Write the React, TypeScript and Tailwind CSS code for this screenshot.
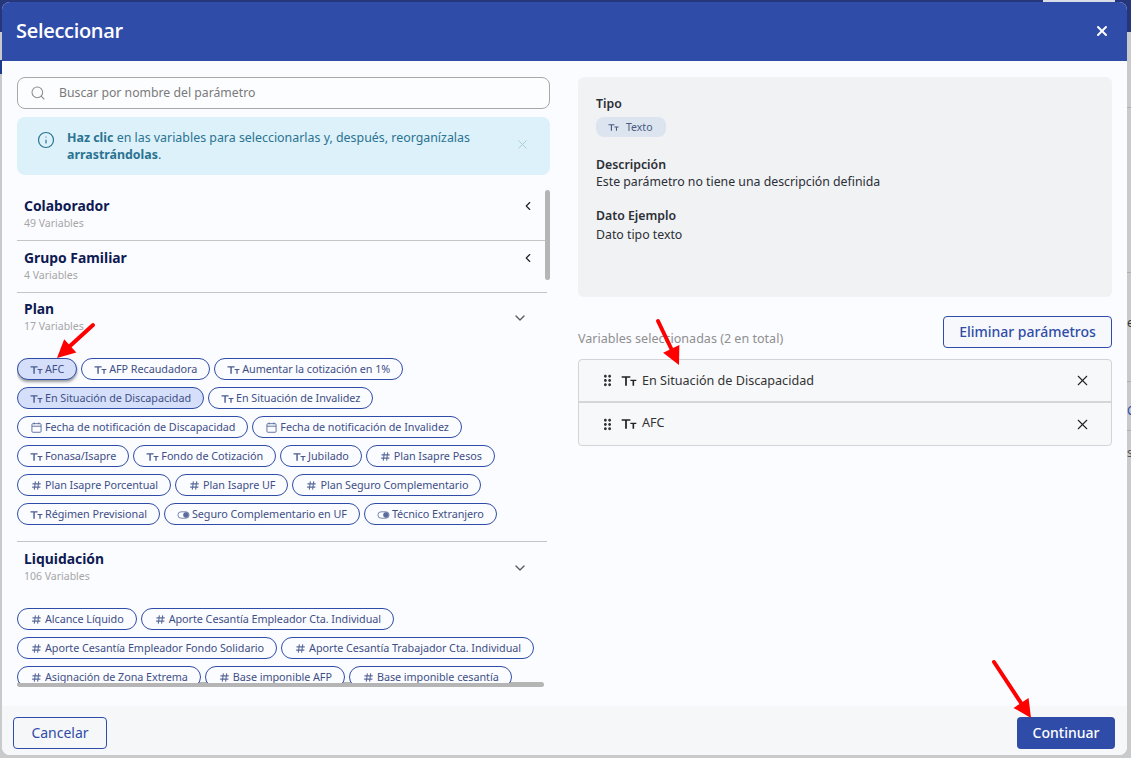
import React from 'react';
import { Search, Info, X, ChevronLeft, ChevronDown } from 'lucide-react';
import { MdDragIndicator } from 'react-icons/md';

type Kind = 'text' | 'num' | 'date' | 'toggle';
type Chip = { label: string; kind: Kind; selected?: boolean; raised?: boolean };

const planChips: Chip[] = [
  { label: 'AFC', kind: 'text', selected: true, raised: true },
  { label: 'AFP Recaudadora', kind: 'text' },
  { label: 'Aumentar la cotización en 1%', kind: 'text' },
  { label: 'En Situación de Discapacidad', kind: 'text', selected: true },
  { label: 'En Situación de Invalidez', kind: 'text' },
  { label: 'Fecha de notificación de Discapacidad', kind: 'date' },
  { label: 'Fecha de notificación de Invalidez', kind: 'date' },
  { label: 'Fonasa/Isapre', kind: 'text' },
  { label: 'Fondo de Cotización', kind: 'text' },
  { label: 'Jubilado', kind: 'text' },
  { label: 'Plan Isapre Pesos', kind: 'num' },
  { label: 'Plan Isapre Porcentual', kind: 'num' },
  { label: 'Plan Isapre UF', kind: 'num' },
  { label: 'Plan Seguro Complementario', kind: 'num' },
  { label: 'Régimen Previsional', kind: 'text' },
  { label: 'Seguro Complementario en UF', kind: 'toggle' },
  { label: 'Técnico Extranjero', kind: 'toggle' },
];

const liquidacionChips: Chip[] = [
  { label: 'Alcance Líquido', kind: 'num' },
  { label: 'Aporte Cesantía Empleador Cta. Individual', kind: 'num' },
  { label: 'Aporte Cesantía Empleador Fondo Solidario', kind: 'num' },
  { label: 'Aporte Cesantía Trabajador Cta. Individual', kind: 'num' },
  { label: 'Asignación de Zona Extrema', kind: 'num' },
  { label: 'Base imponible AFP', kind: 'num' },
  { label: 'Base imponible cesantía', kind: 'num' },
];

function TextIcon({ className }: { className?: string }) {
  return (
    <svg viewBox="0 0 24 18" className={className} fill="currentColor">
      <path d="M1 2h13v2.2H8.8V16H6.2V4.2H1zM14 7h9v2h-3.3v7h-2.4V9H14z" />
    </svg>
  );
}

function KindIcon({ kind }: { kind: Kind }) {
  if (kind === 'text') return <TextIcon className="w-[13px] h-[10px] text-[#4a5a8e]" />;
  if (kind === 'num') {
    return (
      <svg viewBox="0 0 12 12" className="w-[11px] h-[11px] text-[#5a6a9a]" fill="none" stroke="currentColor" strokeWidth="1.2">
        <path d="M4.8 1.5 3.6 10.5M8.4 1.5 7.2 10.5M1.6 4.2h9M1.2 7.8h9" />
      </svg>
    );
  }
  if (kind === 'date') {
    return (
      <svg viewBox="0 0 12 12" className="w-[11px] h-[11px] text-[#5a6a9a]" fill="none" stroke="currentColor" strokeWidth="1">
        <rect x="1" y="1.8" width="10" height="9.4" rx="1" />
        <path d="M1 4.6h10M3.5.5v2M8.5.5v2" />
      </svg>
    );
  }
  return (
    <svg viewBox="0 0 16 10" className="w-[13px] h-[8px] text-[#5a6a9a]" fill="none" stroke="currentColor" strokeWidth="1">
      <rect x="1" y="1" width="14" height="8" rx="4" />
      <circle cx="11" cy="5" r="3" fill="currentColor" />
    </svg>
  );
}

function VariableChip({ chip }: { chip: Chip }) {
  return (
    <div
      className={`h-[22px] pt-[1px] flex items-center gap-[2px] px-[12px] rounded-full border border-[#2f4ca8] text-[10.8px] tracking-[-0.05px] leading-none text-[#3f4f86] whitespace-nowrap ${
        chip.selected ? 'bg-[#d5dffa]' : 'bg-[#fbfcff]'
      } ${chip.raised ? 'shadow-[0_2px_3px_rgba(0,0,0,0.4)]' : ''}`}
    >
      <span className="w-[13px] flex justify-center shrink-0">
        <KindIcon kind={chip.kind} />
      </span>
      {chip.label}
    </div>
  );
}

function CategoryHeader({ title, count, open }: { title: string; count: string; open?: boolean }) {
  return (
    <div className="flex items-center justify-between pl-[7px] pr-[19px]">
      <div>
        <div className="text-[13.9px] leading-[19px] mb-[1px] font-bold text-[#0e1a52]">{title}</div>
        <div className="text-[10.5px] leading-[14px] text-[#a6a6a6]">{count}</div>
      </div>
      {open ? (
        <ChevronDown className="w-[16px] h-[16px] text-[#5b5b5b] mt-[3px]" strokeWidth={2} />
      ) : (
        <ChevronLeft className="w-[14px] h-[14px] text-[#222] -mt-[14px] mr-[-7px]" strokeWidth={2} />
      )}
    </div>
  );
}

function Arrow({ x1, y1, x2, y2, className }: { x1: number; y1: number; x2: number; y2: number; className: string }) {
  // tip sits at x2,y2, coordinates are local to the box
  const ang = Math.atan2(y2 - y1, x2 - x1);
  const back = 18;
  const bx = x2 - back * Math.cos(ang);
  const by = y2 - back * Math.sin(ang);
  const nx = -Math.sin(ang) * 9;
  const ny = Math.cos(ang) * 9;
  return (
    <svg className={`absolute pointer-events-none ${className}`} fill="none">
      <line x1={x1} y1={y1} x2={bx} y2={by} stroke="#fe0000" strokeWidth="4" strokeLinecap="round" />
      <polygon points={`${x2},${y2} ${bx + nx},${by + ny} ${bx - nx},${by - ny}`} fill="#fe0000" />
    </svg>
  );
}

export default function App() {
  return (
    <div className="relative w-[1131px] h-[758px] overflow-hidden bg-[#c9cacc] font-['Noto_Sans',sans-serif]">
      {/* what is left of the page behind the dialog */}
      <div className="h-[32px] bg-[#25367a]" />
      <div className="absolute left-[1043px] top-0 w-[72px] h-[2px] bg-[#d8dde8]" />
      <div className="absolute left-0 top-[60px] w-[2px] h-[14px] bg-[#1c3d8f]" />
      <div className="absolute left-[1127px] top-[107px] w-[4px] h-px bg-[#b0b0b0]" />
      <div className="absolute left-[1127px] top-[272px] w-[4px] h-px bg-[#b0b0b0]" />
      <div className="absolute left-[1127px] top-[381px] w-[4px] h-px bg-[#b0b0b0]" />
      <div className="absolute left-[1127px] top-[430px] w-[4px] h-px bg-[#b0b0b0]" />
      <span className="absolute left-[1127px] top-[315px] text-[12px] leading-[16px] text-[#333]">e</span>
      <span className="absolute left-[1127px] top-[403px] text-[12px] leading-[16px] text-[#2f4ca8]">C</span>
      <span className="absolute left-[1127px] top-[445px] text-[12px] leading-[16px] text-[#555]">s</span>

      <div className="absolute left-[2px] top-[2px] w-[1125px] h-[753px] rounded-[8px] overflow-hidden flex flex-col bg-[#fbfcff]">
        <div className="h-[59px] shrink-0 bg-[#2f4ca8] flex items-center justify-between pl-[14px] pr-[17px] pb-[2px]">
          <h1 className="text-[20px] font-semibold text-white font-['Open_Sans',sans-serif] tracking-[-0.3px]">Seleccionar</h1>
          <X className="w-[16px] h-[16px] text-white" strokeWidth={3} />
        </div>

        <div className="flex-1 min-h-0 flex gap-[27px] pl-[15px] pr-[15px] pt-[16px]">
          <div className="w-[534px] shrink-0 flex flex-col">
            <div className="h-[32px] w-[533px] shrink-0 rounded-[8px] border border-[#a8a8a8] flex items-center pl-[12px] gap-[13px] bg-[#fcfdff]">
              <Search className="w-[16px] h-[16px] text-[#8f8f8f]" strokeWidth={1.6} />
              <span className="text-[12.25px] text-[#7a7a7a]">Buscar por nombre del parámetro</span>
            </div>

            <div className="mt-[8px] h-[58px] w-[533px] shrink-0 rounded-[8px] bg-[#dcf1fa] flex pl-[20px] pr-[20px] pt-[12px] text-[#2b7391]">
              <Info className="w-[18px] h-[18px] mt-[2px] shrink-0" strokeWidth={1.6} />
              <p className="ml-[12px] w-[420px] text-[12.4px] leading-[17px]">
                <b className="font-bold">Haz clic</b> en las variables para seleccionarlas y, después, reorganízalas{' '}
                <b className="font-bold">arrastrándolas</b>.
              </p>
              <X className="ml-auto mt-[8px] w-[15px] h-[15px] text-[#a9cbd9]" strokeWidth={1.5} />
            </div>

            <div className="relative mt-[15px] h-[493px] shrink-0 overflow-hidden">
              <div className="w-[530px] pt-[6px]">
                <CategoryHeader title="Colaborador" count="49 Variables" />
                <div className="mt-[10px] border-b border-[#c4c4c4]" />
                <div className="pt-[7px]">
                  <CategoryHeader title="Grupo Familiar" count="4 Variables" />
                </div>
                <div className="mt-[10px] border-b border-[#c4c4c4]" />
                <div className="pt-[6px]">
                  <CategoryHeader title="Plan" count="17 Variables" open />
                </div>
                <div className="mt-[25px] flex flex-wrap gap-x-[4px] gap-y-[7px]">
                  {planChips.map((c) => (
                    <VariableChip key={c.label} chip={c} />
                  ))}
                </div>
                <div className="mt-[16px] border-b border-[#c4c4c4]" />
                <div className="pt-[7px]">
                  <CategoryHeader title="Liquidación" count="106 Variables" open />
                </div>
                <div className="mt-[25px] flex flex-wrap gap-x-[4px] gap-y-[7px]">
                  {liquidacionChips.map((c) => (
                    <VariableChip key={c.label} chip={c} />
                  ))}
                </div>
              </div>
              {/* scrollbar */}
              <div className="absolute left-[528px] top-0 w-[5px] h-[90px] rounded-full bg-[#b5b5b5]" />
            </div>
            <div className="h-[5px] w-[527px] -mt-[1px] rounded-full bg-[#b5b5b5]" />
          </div>

          <div className="w-[534px] shrink-0 flex flex-col">
            <div className="h-[220px] rounded-[6px] bg-[#f1f2f4] pl-[18px] pt-[18px] text-[#2b2f36]">
              <div className="text-[12.3px] leading-[18px] font-semibold">Tipo</div>
              <div className="mt-[4px] w-[70px] h-[20px] rounded-[8px] bg-[#dbe4ef] flex items-center pl-[12px] gap-[7px] text-[#4a5a80]">
                <TextIcon className="w-[11px] h-[9px]" />
                <span className="text-[10.5px] leading-none">Texto</span>
              </div>
              <div className="mt-[19px] text-[12.3px] leading-[18px] font-semibold">Descripción</div>
              <div className="text-[12.3px] leading-[16px]">Este parámetro no tiene una descripción definida</div>
              <div className="mt-[17px] text-[12.3px] leading-[18px] font-semibold">Dato Ejemplo</div>
              <div className="text-[12.3px] leading-[20px]">Dato tipo texto</div>
            </div>

            <div className="mt-[19px] flex items-end justify-between">
              <span className="text-[12.55px] leading-[18px] text-[#8f8f8f]">Variables seleccionadas (2 en total)</span>
              <div className="w-[169px] h-[32px] pb-[2px] rounded-[4px] border border-[#2f4ca8] bg-[#f7f8fb] flex items-center justify-center text-[14px] font-medium text-[#2f4ca8]">
                Eliminar parámetros
              </div>
            </div>

            <div className="mt-[11px] rounded-[4px] border border-[#d4d4d6] bg-[#f7f8fa]">
              <div className="h-[43px] border-b-2 border-[#d6d6d8] flex items-center pl-[20px] pr-[20px]">
                <MdDragIndicator className="w-[17px] h-[17px] text-[#333] shrink-0" />
                <TextIcon className="ml-[5px] w-[16px] h-[12px] text-[#222] shrink-0" />
                <span className="ml-[5px] mt-[1px] text-[12.6px] text-[#333]">En Situación de Discapacidad</span>
                <X className="ml-auto w-[17px] h-[17px] text-[#222]" strokeWidth={1.5} />
              </div>
              <div className="h-[42px] flex items-center pl-[20px] pr-[20px]">
                <MdDragIndicator className="w-[17px] h-[17px] text-[#333] shrink-0" />
                <TextIcon className="ml-[5px] w-[16px] h-[12px] text-[#222] shrink-0" />
                <span className="ml-[5px] -mt-[2px] text-[12.6px] text-[#333]">AFC</span>
                <X className="ml-auto w-[17px] h-[17px] text-[#222]" strokeWidth={1.5} />
              </div>
            </div>
          </div>
        </div>

        <div className="h-[49px] shrink-0 bg-[#f6f7f9] flex items-start justify-between pl-[11px] pr-[12px] pt-[11px]">
          <div className="w-[94px] h-[32px] pb-[2px] rounded-[4px] border border-[#2f4ca8] flex items-center justify-center text-[14px] text-[#2f4ca8]">
            Cancelar
          </div>
          <div className="w-[98px] h-[32px] pb-[1px] rounded-[4px] bg-[#2f4ca8] flex items-center justify-center text-[14px] font-medium text-white">
            Continuar
          </div>
        </div>
      </div>

      <Arrow x1={38} y1={5} x2={2} y2={38} className="left-[55px] top-[320px] w-[42px] h-[42px]" />
      <Arrow x1={3} y1={4} x2={24} y2={48} className="left-[655px] top-[317px] w-[30px] h-[52px]" />
      <Arrow x1={3} y1={4} x2={40} y2={60} className="left-[991px] top-[658px] w-[44px] h-[64px]" />
    </div>
  );
}
